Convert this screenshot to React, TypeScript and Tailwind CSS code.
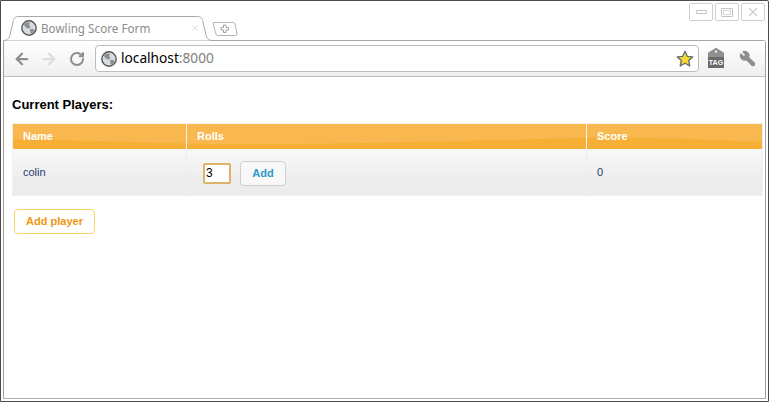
import { ArrowLeft, ArrowRight, RotateCw, Wrench, X } from 'lucide-react';

const Globe = () => (
  <svg width="16" height="16" viewBox="0 0 16 16" className="shrink-0">
    <circle cx="8" cy="8" r="7.2" fill="#d8dbdd" stroke="#55595c" strokeWidth="1.4" />
    <path d="M3.500 3.500 7 2.200l2 1-1 2 1.500 1.500-1 1.500H6L3 5.500z" fill="#8b9094" />
    <path d="M9 9h3.500l1 1.500L11 14l-1.500-1z" fill="#8b9094" />
  </svg>
);

const WindowButton = ({ children }: { children: React.ReactNode }) => (
  <div className="flex h-[18px] w-6 items-center justify-center rounded-[2px] border border-[#cfcfcf] bg-white">
    {children}
  </div>
);

const Gloss = () => (
  <svg
    viewBox="0 0 749 25"
    preserveAspectRatio="none"
    className="absolute inset-0 h-full w-full"
  >
    <path d="M0 0h749v18C680 14 620 13 560 14 420 18 260 22 150 19 90 17 40 16 0 15z" fill="#f8b84f" />
  </svg>
);

const App = () => {
  return (
    <div className="flex h-[402px] w-[769px] flex-col overflow-hidden rounded-tr-[2px] border border-[#4c4c4c] bg-white font-['Liberation_Sans',sans-serif]">
      <div className="flex h-[39px] shrink-0 items-end pl-[2px] pr-[3px]">
        <div className="relative z-10 -mb-px flex h-[25px] w-[210px] items-center pl-[18px] pr-[13px]">
          <svg viewBox="0 0 210 25" className="absolute inset-0 h-full w-full">
            <path
              d="M0 24.500C4 24.500 6 23 7 19L10 6C11 2 12 .5 16 .5H194C198 .5 199 2 200 6L203 19C204 23 206 24.500 210 24.500"
              fill="#fff"
              stroke="#a9a9a9"
            />
          </svg>
          <div className="relative flex w-full items-center">
            <Globe />
            <span className="ml-[4px] font-['Noto_Sans',sans-serif] text-[11.7px] text-[#8c8c8c]">
              Bowling Score Form
            </span>
            <X size={10} strokeWidth={1.5} className="ml-auto text-[#c8c8c8]" />
          </div>
        </div>
        <svg width="26" height="16" viewBox="0 0 26 16" className="mb-[3px] -ml-[1px] shrink-0">
          <path
            d="M2 1.500H21Q22.500 1.500 23 3L25 13Q25.300 14.500 23.500 14.500H6Q4.500 14.500 4 13L1.200 3Q.9 1.500 2 1.500z"
            fill="#fff"
            stroke="#b5b5b5"
          />
          <path
            d="M11.500 4h2.500v2.500h2.500V9H14v2.500h-2.500V9H9V6.500h2.500z"
            fill="#fff"
            stroke="#a0a0a0"
          />
        </svg>
        <div className="mb-[19px] ml-auto flex gap-[2px]">
          <WindowButton>
            <div className="h-[4px] w-[11px] rounded-[1px] border border-[#c4c4c4]" />
          </WindowButton>
          <WindowButton>
            <div className="h-[9px] w-[12px] rounded-[1px] border border-[#c4c4c4] p-px">
              <div className="h-full w-full border border-[#d8d8d8]" />
            </div>
          </WindowButton>
          <WindowButton>
            <X size={14} strokeWidth={2.2} className="text-[#cdcdcd]" />
          </WindowButton>
        </div>
      </div>

      <div className="mx-[2px] mb-[2px] flex min-h-0 flex-1 flex-col rounded-t-[3px] border border-t-[#a9a9a9] border-r-[#a0a0a0] border-b-[#b0b0b0] border-l-[#a0a0a0]">
        <div className="flex h-[36px] shrink-0 items-center border-b border-[#bdbdbd] bg-gradient-to-b from-white to-[#efefef] pl-[9px] pr-[9px]">
          <ArrowLeft size={18} strokeWidth={3} className="text-[#8e8e8e]" />
          <ArrowRight size={18} strokeWidth={3} className="ml-[9px] text-[#dcdcdc]" />
          <RotateCw size={16} strokeWidth={3} className="ml-[11px] text-[#8e8e8e]" />
          <div className="ml-[10px] flex h-[27px] w-[604px] items-center rounded-[4px] border border-[#bcbcbc] bg-white pl-[5px] pr-[4px]">
            <Globe />
            <span className="ml-[4px] font-['Noto_Sans',sans-serif] text-[13.7px]">
              <span className="text-black">localhost</span>
              <span className="text-[#808080]">:8000</span>
            </span>
            <svg width="18" height="18" viewBox="0 0 18 18" className="ml-auto">
              <path
                d="M9 1.300l2.300 5 5.400.6-4 3.700 1.100 5.400L9 13.300 4.200 16l1.100-5.400-4-3.700 5.400-.6z"
                fill="#f7d634"
                stroke="#5f6b7a"
                strokeWidth="1.300"
                strokeLinejoin="round"
              />
            </svg>
          </div>
          <svg width="18" height="22" viewBox="0 0 18 22" className="ml-[8px] -mt-[2px] shrink-0">
            <path d="M1 6l8-5 8 5v15H1z" fill="#6a6a6a" />
            <path d="M1 6l8-5 8 5v4H1z" fill="#8f8f8f" />
            <circle cx="9" cy="4.500" r="1.200" fill="#e8e8e8" />
            <text
              x="9"
              y="17.500"
              textAnchor="middle"
              fontSize="7"
              fontWeight="700"
              fill="#fff"
              fontFamily="Liberation Sans, sans-serif"
            >
              TAG
            </text>
          </svg>
          <Wrench
            size={17}
            strokeWidth={2}
            className="ml-auto -scale-x-100 fill-[#8e8e8e] text-[#8e8e8e]"
          />
        </div>

        <div className="flex-1 bg-white pl-[8px] pr-[3px] pt-[20px]">
          <h2 className="text-[13px] leading-[15px] font-bold text-black">Current Players:</h2>
          <div className="mt-[11px] w-[751px] border border-[#f1f1f1]">
            <div className="relative grid h-[25px] grid-cols-[173px_400px_176px] bg-[#f7ae35]">
              <Gloss />
              <div className="relative flex items-center pl-[10px] text-[11px] font-bold text-[#fff]">Name</div>
              <div className="relative flex items-center border-l border-[#f5f5f5] pl-[10px] text-[11px] font-bold text-[#fff]">Rolls</div>
              <div className="relative flex items-center border-l border-[#f5f5f5] pl-[10px] text-[11px] font-bold text-[#fff]">Score</div>
            </div>
            <div className="grid h-[46px] grid-cols-[173px_400px_176px] bg-gradient-to-b from-[#f9f9f9] to-[#ececec] to-70% text-[11px] text-[#27386f]">
              <div className="flex items-center pl-[10px]">colin</div>
              <div className="flex items-center border-l border-[#eeeeee] pl-[16px] pt-[2px]">
                <input
                  readOnly
                  value="3"
                  className="h-[21px] w-[28px] rounded-[2px] border-2 border-[#dcb36a] bg-white pl-[1px] text-[12px] text-black outline-none"
                />
                <button className="ml-[9px] h-[25px] w-[46px] rounded-[4px] border border-[#cfcfcf] bg-[#f8f8f8] text-[11px] font-bold text-[#2a97c8]">
                  Add
                </button>
              </div>
              <div className="flex items-center border-l border-[#eeeeee] pl-[10px]">0</div>
            </div>
          </div>
          <button className="mt-[13px] ml-[2px] h-[25px] w-[81px] rounded-[4px] border border-[#fbd467] bg-white text-[11px] font-bold text-[#ef950f]">
            Add player
          </button>
        </div>
      </div>
    </div>
  );
};

export default App;
